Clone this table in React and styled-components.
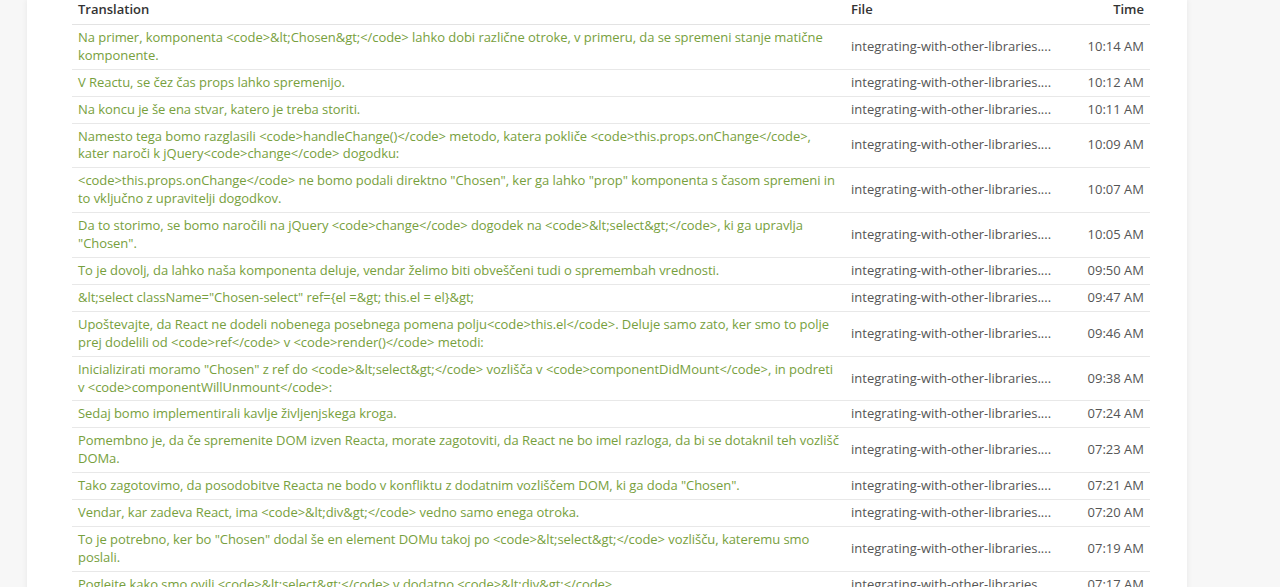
import React from 'react'
import styled, { createGlobalStyle } from 'styled-components';

const GlobalStyle = createGlobalStyle`
  body {
    margin: 0;
    background: #f7f7f7;
    font-family: "Open Sans", "Liberation Sans", sans-serif;
  }
`;

const Card = styled.div`
  margin-left: 27px;
  width: 1160px;
  background: #fff;
  box-shadow: 0 0 6px rgba(0, 0, 0, 0.07);
  padding: 0 37px 20px 45px;
  box-sizing: border-box;
`;

const Table = styled.table`
  width: 1078px;
  border-collapse: collapse;
  table-layout: fixed;
  font-size: 13px;
  line-height: 17.9px;
`;

const Head = styled.th`
  text-align: ${p => p.right ? 'right' : 'left'};
  font-weight: 600;
  color: #333;
  padding: 1px 6px 5px;
  border-bottom: 1px solid #e3e3e3;
`;

const Row = styled.tr`
  border-bottom: 1px solid #e8e8e8;
`;

const Cell = styled.td`
  padding: 4px ${p => p.green ? '4px' : '6px'} 4px 6px;
  vertical-align: middle;
  color: ${p => p.green ? '#77a03d' : '#555'};
  letter-spacing: ${p => p.green ? '-0.05px' : '0'};
  text-align: ${p => p.right ? 'right' : 'left'};
  white-space: ${p => p.nowrap ? 'nowrap' : 'normal'};
  overflow: hidden;
`;

const rows = [
  ['Na primer, komponenta <code>&lt;Chosen&gt;</code> lahko dobi različne otroke, v primeru, da se spremeni stanje matične komponente.', '10:14 AM'],
  ['V Reactu, se čez čas props lahko spremenijo.', '10:12 AM'],
  ['Na koncu je še ena stvar, katero je treba storiti.', '10:11 AM'],
  ['Namesto tega bomo razglasili <code>handleChange()</code> metodo, katera pokliče <code>this.props.onChange</code>, kater naroči k jQuery<code>change</code> dogodku:', '10:09 AM'],
  ['<code>this.props.onChange</code> ne bomo podali direktno "Chosen", ker ga lahko "prop" komponenta s časom spremeni in to vključno z upravitelji dogodkov.', '10:07 AM'],
  ['Da to storimo, se bomo naročili na jQuery <code>change</code> dogodek na <code>&lt;select&gt;</code>, ki ga upravlja "Chosen".', '10:05 AM'],
  ['To je dovolj, da lahko naša komponenta deluje, vendar želimo biti obveščeni tudi o spremembah vrednosti.', '09:50 AM'],
  ['&lt;select className="Chosen-select" ref={el =&gt; this.el = el}&gt;', '09:47 AM'],
  ['Upoštevajte, da React ne dodeli nobenega posebnega pomena polju<code>this.el</code>. Deluje samo zato, ker smo to polje prej dodelili od <code>ref</code> v <code>render()</code> metodi:', '09:46 AM'],
  ['Inicializirati moramo "Chosen" z ref do <code>&lt;select&gt;</code> vozlišča v <code>componentDidMount</code>, in podreti v <code>componentWillUnmount</code>:', '09:38 AM'],
  ['Sedaj bomo implementirali kavlje življenjskega kroga.', '07:24 AM'],
  ['Pomembno je, da če spremenite DOM izven Reacta, morate zagotoviti, da React ne bo imel razloga, da bi se dotaknil teh vozlišč DOMa.', '07:23 AM'],
  ['Tako zagotovimo, da posodobitve Reacta ne bodo v konfliktu z dodatnim vozliščem DOM, ki ga doda "Chosen".', '07:21 AM'],
  ['Vendar, kar zadeva React, ima <code>&lt;div&gt;</code> vedno samo enega otroka.', '07:20 AM'],
  ['To je potrebno, ker bo "Chosen" dodal še en element DOMu takoj po <code>&lt;select&gt;</code> vozlišču, kateremu smo poslali.', '07:19 AM'],
  ['Poglejte kako smo ovili <code>&lt;select&gt;</code> v dodatno <code>&lt;div&gt;</code>.', '07:17 AM'],
];

const App = () => {
  return (
    <>
      <GlobalStyle />
      <Card>
        <Table>
          <colgroup>
            <col style={{ width: 773 }} />
            <col style={{ width: 215 }} />
            <col style={{ width: 90 }} />
          </colgroup>
          <thead>
            <tr>
              <Head>Translation</Head>
              <Head>File</Head>
              <Head right>Time</Head>
            </tr>
          </thead>
          <tbody>
            {rows.map(([text, time], i) => (
              <Row key={i}>
                <Cell green>{text}</Cell>
                <Cell nowrap>integrating-with-other-libraries....</Cell>
                <Cell right nowrap>{time}</Cell>
              </Row>
            ))}
          </tbody>
        </Table>
      </Card>
    </>
  )
}

export default App
